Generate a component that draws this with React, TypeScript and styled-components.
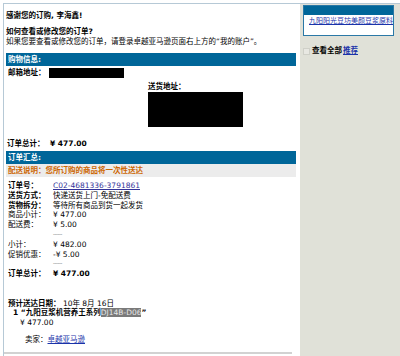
import styled, { createGlobalStyle } from 'styled-components';

const GlobalStyle = createGlobalStyle`
	html, body {
		margin: 0;
		padding: 0;
		background: #ffffff;
	}
	body {
		font-family: 'DejaVu Sans', 'Noto Sans CJK SC', sans-serif;
		font-size: 7.5px;
		line-height: 10px;
		color: #000000;
	}
`;

interface SummaryRow {
	label: string;
	value: string;
	strong?: boolean;
	link?: boolean;
	rule?: boolean;
}

const summaryRows: SummaryRow[] = [
	{ label: '订单号：', value: 'C02-4681336-3791861', strong: true, link: true },
	{ label: '送货方式：', value: '快递送货上门-免配送费', strong: true },
	{ label: '货物拆分：', value: '等待所有商品到货一起发货', strong: true },
	{ label: '商品小计：', value: '¥ 477.00' },
	{ label: '配送费：', value: '¥ 5.00' },
	{ label: '', value: '------', rule: true },
	{ label: '小计：', value: '¥ 482.00' },
	{ label: '促销优惠：', value: '-¥ 5.00' },
	{ label: '', value: '------', rule: true },
];

function App() {
	return (
		<>
			<GlobalStyle />
			<Root>
				<Frame>
					<Main>
						<Greeting>感谢您的订购, 李海鑫!</Greeting>
						<HelpTitle>如何查看或修改您的订单?</HelpTitle>
						<HelpText>如果您要查看或修改您的订单，请登录卓越亚马逊页面右上方的“我的账户”。</HelpText>

						<SectionBar $top={6}>购物信息:</SectionBar>
						<EmailRow>
							<Label $strong>邮箱地址：</Label>
							<Redacted $w={75} $h={10} />
						</EmailRow>
						<AddressBlock>
							<Label $strong>送货地址：</Label>
							<Redacted $w={95} $h={35} />
						</AddressBlock>
						<TotalLine>
							<TotalLabel>订单总计：</TotalLabel>
							<strong>¥ 477.00</strong>
						</TotalLine>

						<SectionBar $top={2}>订单汇总:</SectionBar>
						<NoticeBar>配送说明：您所订购的商品将一次性送达</NoticeBar>

						<SummaryGrid>
							{summaryRows.map((row, i) => (
								<SummaryItem key={i}>
									<Label $strong={row.strong}>{row.label}</Label>
									{row.link ? (
										<OrderLink href="#">{row.value}</OrderLink>
									) : row.rule ? (
										<Rule>{row.value}</Rule>
									) : (
										<span>{row.value}</span>
									)}
								</SummaryItem>
							))}
							<SummaryItem>
								<Label $strong>订单总计：</Label>
								<strong>¥ 477.00</strong>
							</SummaryItem>
						</SummaryGrid>

						<Shipment>
							<div>
								<strong>预计送达日期：</strong> 10年 8月 16日
							</div>
							<ItemTitle>
								1 “九阳豆浆机营养王系列<Highlight>DJ14B-D06</Highlight>”
							</ItemTitle>
							<ItemPrice>¥ 477.00</ItemPrice>
							<Seller>
								卖家：<SellerLink href="#">卓越亚马逊</SellerLink>
							</Seller>
						</Shipment>
						<BottomRule />
					</Main>

					<Side>
						<PromoBox>
							<PromoHead />
							<PromoBody>
								<PromoLink href="#">九阳阳光豆坊美颜豆浆原料</PromoLink>
							</PromoBody>
						</PromoBox>
						<ViewAll>
							<Tick />
							<strong>查看全部</strong>
							<ViewAllLink href="#">推荐</ViewAllLink>
						</ViewAll>
					</Side>
				</Frame>
			</Root>
		</>
	);
}

export default App;

const Root = styled.div`
	height: 356px;
	padding: 3px 0 0 3px;
	box-sizing: border-box;
	overflow: hidden;
`;

const Frame = styled.div`
	display: flex;
	height: 100%;
	border-top: 1px solid #b6c9d6;
`;

const Main = styled.div`
	width: 290px;
	flex-shrink: 0;
	border-left: 1px solid #b6c9d6;
	padding: 0 2px;
	display: flex;
	flex-direction: column;
`;

const Greeting = styled.div`
	margin-top: 7px;
	font-weight: bold;
`;

const HelpTitle = styled.div`
	margin-top: 6px;
	font-weight: bold;
`;

const HelpText = styled.div`
	white-space: nowrap;
`;

const SectionBar = styled.div<{ $top: number }>`
	margin-top: ${({ $top }) => $top}px;
	height: 13px;
	line-height: 13px;
	padding-left: 2px;
	background: #006699;
	color: #ffffff;
	font-weight: bold;
`;

const Label = styled.span<{ $strong?: boolean }>`
	font-weight: ${({ $strong }) => ($strong ? 'bold' : 'normal')};
`;

const EmailRow = styled.div`
	display: grid;
	grid-template-columns: 41px auto;
	justify-content: start;
	align-items: center;
	margin-top: 2px;
	padding-left: 2px;
`;

const Redacted = styled.div<{ $w: number; $h: number }>`
	width: ${({ $w }) => $w}px;
	height: ${({ $h }) => $h}px;
	background: #000000;
`;

const AddressBlock = styled.div`
	display: flex;
	flex-direction: column;
	align-items: flex-start;
	margin: 4px 0 0 142px;
`;

const TotalLine = styled.div`
	margin-top: 12px;
	padding-left: 1px;
	font-weight: bold;
`;

const TotalLabel = styled.span`
	display: inline-block;
	width: 43px;
`;

const NoticeBar = styled.div`
	height: 13px;
	line-height: 13px;
	padding-left: 2px;
	background: #ececec;
	color: #cc6600;
	font-weight: bold;
`;

const SummaryGrid = styled.div`
	display: grid;
	grid-template-columns: 45px auto;
	justify-content: start;
	margin-top: 4px;
	padding-left: 2px;
	line-height: 9.8px;
`;

const SummaryItem = styled.div`
	display: contents;
`;

const OrderLink = styled.a`
	color: #333399;
	text-decoration: underline;
`;

const Rule = styled.span`
	color: #555555;
	font-size: 5px;
	letter-spacing: -0.3px;
`;

const Shipment = styled.div`
	margin-top: 20px;
	padding-left: 2px;
	line-height: 9.5px;
`;

const ItemTitle = styled.div`
	padding-left: 5px;
	font-weight: bold;
`;

const Highlight = styled.span`
	background: #7a7a7a;
	color: #e8e8e8;
	font-weight: normal;
`;

const ItemPrice = styled.div`
	padding-left: 12px;
`;

const Seller = styled.div`
	margin-top: 8px;
	padding-left: 17px;
`;

const SellerLink = styled.a`
	color: #1a33aa;
	text-decoration: underline;
`;

const BottomRule = styled.div`
	margin: 7px 0 0 -2px;
	height: 2px;
	width: 288px;
	background: #d2d2d2;
`;

const Side = styled.div`
	flex: 1;
	margin-left: 2px;
	padding: 1px 6px 0 3px;
	background: #e0e1d8;
`;

const PromoBox = styled.div`
	border: 1px solid #2a78a6;
	background: #ffffff;
`;

const PromoHead = styled.div`
	height: 9px;
	background: #006699;
`;

const PromoBody = styled.div`
	height: 20px;
	padding: 1px 0 0 5px;
	box-sizing: border-box;
	font-size: 7px;
`;

const PromoLink = styled.a`
	color: #1a33aa;
	text-decoration: underline;
	white-space: nowrap;
`;

const ViewAll = styled.div`
	display: flex;
	align-items: center;
	margin-top: 10px;
	gap: 1px;
`;

const Tick = styled.span`
	display: inline-block;
	width: 5px;
	height: 5px;
	border: 1px solid #cfd0c8;
	background: #e8e8e2;
	margin-right: 1px;
`;

const ViewAllLink = styled.a`
	color: #1a33aa;
	font-weight: bold;
	text-decoration: underline;
`;
